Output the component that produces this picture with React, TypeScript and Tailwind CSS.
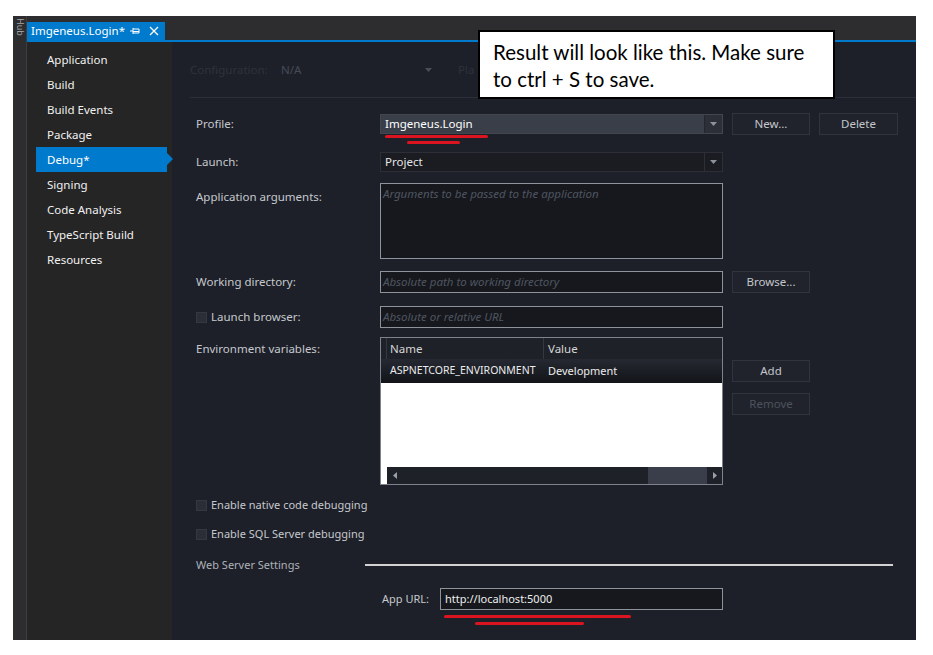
import React from "react";

const Arrow = () => (
  <svg width="7" height="4" viewBox="0 0 7 4"><path d="M0 0 L7 0 L3.5 4 Z" fill="#8d929c" /></svg>
);

const Checkbox = () => (
  <span className="inline-block w-[11px] h-[11px] bg-[#2b2e36] border border-[#343842] mr-[4px]" />
);

const Btn = ({ children, dim, className = "" }: { children: React.ReactNode; dim?: boolean; className?: string }) => (
  <div
    className={
      "h-[22px] w-[78px] flex items-center justify-center bg-[#20232b] border border-[#31343d] text-[11.5px] " +
      (dim ? "text-[#4d525d] " : "text-[#c3c6cc] ") +
      className
    }
  >
    {children}
  </div>
);

export default function App() {
  const items = ["Application", "Build", "Build Events", "Package", "Debug*", "Signing", "Code Analysis", "TypeScript Build", "Resources"];
  return (
    <div className="w-[933px] h-[655px] bg-white relative overflow-hidden font-['Noto_Sans',sans-serif]">
      <div className="pt-[16px] pl-[13px]">
        <div className="w-[903px] h-[624px] flex">
          {/* left tool strip */}
          <div className="w-[14px] bg-[#2d2d30] border-r border-[#3c3c41] flex justify-center pt-[2px]">
            <span className="[writing-mode:vertical-rl] text-[9px] leading-[12px] text-[#a8a8a8]">
              Hub
            </span>
          </div>
          <div className="flex-1 flex flex-col">
            {/* tab bar */}
            <div className="h-[24px] bg-[#2d2d30] flex items-end">
              <div className="h-[18px] w-[138px] bg-[#007acc] flex items-center pl-[4px] text-white text-[11.5px]">
                <span className="leading-none w-[99px]">Imgeneus.Login*</span>
                <svg width="10" height="8" viewBox="0 0 10 8">
                  <path d="M0 4 H3 M3 1 V7 M3 2 H9 V6 H3 M3 4.5 H9" stroke="white" strokeWidth="1" fill="none" />
                </svg>
                <svg className="ml-[9px]" width="10" height="10" viewBox="0 0 10 10">
                  <path d="M1 1 L9 9 M9 1 L1 9" stroke="white" strokeWidth="1.3" />
                </svg>
              </div>
            </div>
            <div className="h-[2px] bg-[#007acc]" />
            <div className="flex-1 flex">
              {/* sidebar */}
              <div className="w-[145px] bg-[#252526] pt-[5px] relative z-10">
                {items.map((it) => {
                  const active = it === "Debug*";
                  return (
                    <div
                      key={it}
                      className={
                        "relative h-[25px] ml-[9px] w-[131px] pl-[11px] flex items-center text-[11.5px] " +
                        (active ? "bg-[#007acc] text-white" : "text-[#f1f1f1]")
                      }
                    >
                      {it}
                      {active && (
                        <span className="absolute right-[-6px] top-[6px] w-0 h-0 border-l-[6px] border-l-[#007acc] border-y-[6px] border-y-transparent" />
                      )}
                    </div>
                  );
                })}
              </div>
              {/* main */}
              <div className="flex-1 bg-[#1d2029] pt-[18px] text-[11.5px] text-[#c6c8cd] flex flex-col">
                {/* config row */}
                <div className="h-[20px] pl-[18px] flex items-center">
                  <span className="w-[91px] text-[#2e323c]">Configuration:</span>
                  <span className="w-[144px] text-[#464b56]">N/A</span>
                  <span className="opacity-40"><Arrow /></span>
                  <span className="ml-[26px] w-[20px] overflow-hidden whitespace-nowrap text-[#2e323c]">Pla</span>
                </div>
                <div className="mt-[17px] ml-[18px] h-px bg-[#2a2e38]" />
                {/* profile */}
                <div className="mt-[16px] h-[20px] flex items-center">
                  <span className="pl-[24px] w-[208px]">Profile:</span>
                  <div className="relative w-[343px] h-[20px] bg-[#3a3e49] border border-[#42464f] flex items-center">
                    <span className="pl-[4px] flex-1 text-white">Imgeneus.Login</span>
                    <span className="w-[18px] h-full flex items-center justify-center border-l border-[#23262e] bg-[#2c2f38]"><Arrow /></span>
                    <span className="absolute left-[4px] top-[20px] w-[103px] h-[3px] bg-[#dc1420] rounded-full" />
                    <span className="absolute left-[26px] top-[26px] w-[53px] h-[3px] bg-[#dc1420] rounded-full" />
                  </div>
                  <Btn className="ml-[9px]">New...</Btn>
                  <Btn className="ml-[9px] w-[79px]">Delete</Btn>
                </div>
                {/* launch */}
                <div className="mt-[18px] h-[20px] flex items-center">
                  <span className="pl-[24px] w-[208px]">Launch:</span>
                  <div className="w-[343px] h-[20px] bg-[#1a1c22] border border-[#2c2f38] flex items-center">
                    <span className="pl-[4px] flex-1 text-[#e6e6e6]">Project</span>
                    <span className="w-[18px] h-full flex items-center justify-center border-l border-[#2c2f38]"><Arrow /></span>
                  </div>
                </div>
                {/* app args */}
                <div className="mt-[11px] flex">
                  <span className="pl-[24px] w-[208px] pt-[5px]">Application arguments:</span>
                  <div className="w-[343px] h-[76px] bg-[#16181d] border border-[#8e929b] pl-[2px] pt-[1px] italic text-[#4f5560]">
                    Arguments to be passed to the application
                  </div>
                </div>
                {/* working dir */}
                <div className="mt-[12px] h-[22px] flex items-center">
                  <span className="pl-[24px] w-[208px]">Working directory:</span>
                  <div className="w-[343px] h-[22px] bg-[#16181d] border border-[#8e929b] pl-[2px] flex items-center italic text-[#4f5560]">
                    Absolute path to working directory
                  </div>
                  <Btn className="ml-[9px]">Browse...</Btn>
                </div>
                {/* launch browser */}
                <div className="mt-[13px] h-[22px] flex items-center">
                  <span className="pl-[24px] w-[208px] flex items-center">
                    <Checkbox />
                    Launch browser:
                  </span>
                  <div className="w-[343px] h-[22px] bg-[#16181d] border border-[#8e929b] pl-[2px] flex items-center italic text-[#4f5560]">
                    Absolute or relative URL
                  </div>
                </div>
                {/* env vars */}
                <div className="mt-[9px] flex">
                  <span className="pl-[24px] w-[208px] pt-[3px]">Environment variables:</span>
                  <div className="w-[343px] h-[148px] border border-[#7d828c] bg-white flex flex-col">
                    <div className="h-[21px] bg-[#1e2128] flex items-center text-[#d6d6d6]">
                      <span className="w-[6px] h-full border-r border-[#343842]" />
                      <span className="w-[157px] pl-[3px] h-full flex items-center border-r border-[#343842]">Name</span>
                      <span className="pl-[4px]">Value</span>
                    </div>
                    <div className="h-[24px] bg-gradient-to-b from-[#262932] to-[#121419] flex items-center text-[#ececec] text-[10.5px]">
                      <span className="w-[6px]" />
                      <span className="w-[157px] pl-[3px] whitespace-nowrap">ASPNETCORE_ENVIRONMENT</span>
                      <span className="pl-[4px] text-[11px]">Development</span>
                    </div>
                    <div className="flex-1" />
                    <div className="h-[17px] ml-[6px] flex bg-[#1e2128]">
                      <span className="w-[15px] flex items-center justify-center">
                        <svg width="4" height="7" viewBox="0 0 4 7"><path d="M4 0 V7 L0 3.5 Z" fill="#9aa0aa" /></svg>
                      </span>
                      <span className="w-[246px]" />
                      <span className="w-[59px] bg-[#3a3e4b]" />
                      <span className="flex-1 flex items-center justify-center">
                        <svg width="4" height="7" viewBox="0 0 4 7"><path d="M0 0 V7 L4 3.5 Z" fill="#9aa0aa" /></svg>
                      </span>
                    </div>
                  </div>
                  <div className="ml-[9px] pt-[23px] flex flex-col gap-[11px]">
                    <Btn>Add</Btn>
                    <Btn dim>Remove</Btn>
                  </div>
                </div>
                {/* checkboxes */}
                <div className="mt-[10px] h-[20px] pl-[24px] flex items-center text-[11px]">
                  <Checkbox />
                  Enable native code debugging
                </div>
                <div className="mt-[9px] h-[20px] pl-[24px] flex items-center text-[11px]">
                  <Checkbox />
                  Enable SQL Server debugging
                </div>
                {/* web server */}
                <div className="mt-[11px] h-[20px] flex items-center text-[11px]">
                  <span className="pl-[24px] w-[193px] text-[#aeb1b8]">Web Server Settings</span>
                  <span className="w-[528px] h-[2px] bg-[#d2d2d2]" />
                </div>
                <div className="mt-[13px] h-[22px] flex items-center text-[11px]">
                  <span className="w-[268px] pr-[11px] text-right">App URL:</span>
                  <div className="relative w-[283px] h-[22px] bg-[#16181d] border border-[#8e929b] pl-[4px] flex items-center text-[#eeeeee]">
                    http://localhost:5000
                    <span className="absolute left-[3px] top-[26px] w-[187px] h-[3px] bg-[#dc1420] rounded-full" />
                    <span className="absolute left-[34px] top-[33px] w-[109px] h-[3px] bg-[#dc1420] rounded-full" />
                  </div>
                </div>
              </div>
            </div>
          </div>
        </div>
      </div>
      {/* annotation callout */}
      <div className="absolute left-[478px] top-[30px] w-[357px] h-[69px] bg-white border-2 border-black pl-[13px] pt-[7px] font-['Lato',sans-serif] text-[20.5px] leading-[27px] text-black">
        Result will look like this. Make sure
        <br />
        to ctrl + S to save.
      </div>
    </div>
  );
}
